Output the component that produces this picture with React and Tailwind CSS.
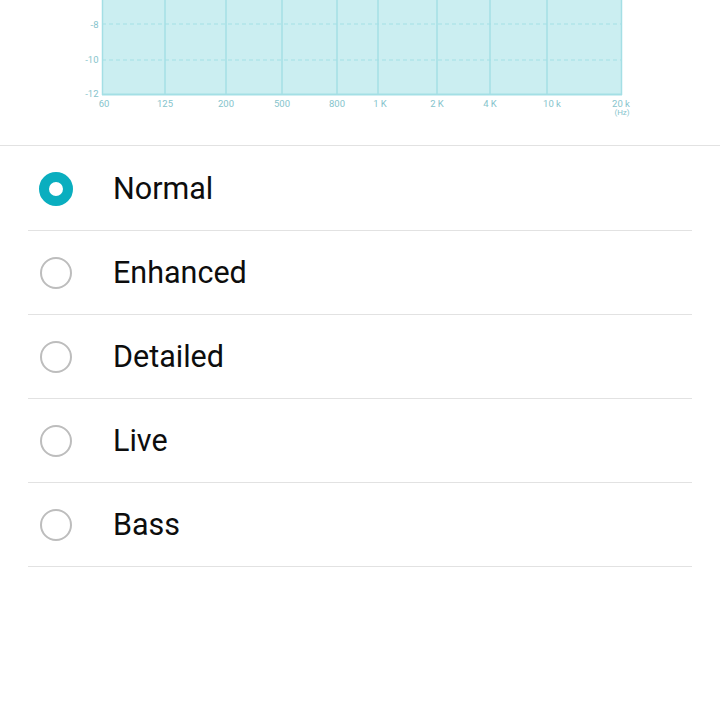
import React, { useState } from 'react';

const presets = ['Normal', 'Enhanced', 'Detailed', 'Live', 'Bass'];

const gridX = [165, 226, 282, 337, 378, 437, 490, 547];

const freqLabels = [
  { x: 104, t: '60' },
  { x: 165, t: '125' },
  { x: 226, t: '200' },
  { x: 282, t: '500' },
  { x: 337, t: '800' },
  { x: 380, t: '1 K' },
  { x: 437, t: '2 K' },
  { x: 490, t: '4 K' },
  { x: 552, t: '10 k' },
  { x: 621, t: '20 k' },
];

const dbLabels = [
  { y: 28, t: '-8' },
  { y: 63, t: '-10' },
  { y: 97, t: '-12' },
];

const EqChart = () => (
  <svg width="720" height="145" viewBox="0 0 720 145" className="block">
    <rect x="102" y="0" width="520" height="94" fill="#cbeef1" />
    {gridX.map((x) => (
      <line key={x} x1={x} y1="0" x2={x} y2="94" stroke="#a4dfe5" strokeWidth="1.5" />
    ))}
    <line x1="102" y1="24" x2="622" y2="24" stroke="#a4dfe5" strokeWidth="1.2" strokeDasharray="4 3" />
    <line x1="102" y1="60" x2="622" y2="60" stroke="#a4dfe5" strokeWidth="1.2" strokeDasharray="4 3" />
    <line x1="102.5" y1="0" x2="102.5" y2="95" stroke="#a4dfe5" strokeWidth="1.5" />
    <line x1="621.5" y1="0" x2="621.5" y2="95" stroke="#a4dfe5" strokeWidth="1.5" />
    <line x1="102" y1="94.5" x2="622" y2="94.5" stroke="#a4dfe5" strokeWidth="2" />
    <g fill="#86c4cc" fontFamily="Roboto, sans-serif" fontSize="9.5">
      {dbLabels.map((d) => (
        <text key={d.t} x="98.5" y={d.y} textAnchor="end">{d.t}</text>
      ))}
      {freqLabels.map((f) => (
        <text key={f.t} x={f.x} y="107" textAnchor="middle">{f.t}</text>
      ))}
      <text x="622" y="115" textAnchor="middle" fontSize="8">(Hz)</text>
    </g>
  </svg>
);

const Radio = ({ checked }) => (
  <div className="w-[34px] h-[34px] flex items-center justify-center shrink-0">
    {checked ? (
      <div className="w-[34px] h-[34px] rounded-full border-[10.5px] border-[#0aaebf] bg-white" />
    ) : (
      <div className="w-[32px] h-[32px] rounded-full border-2 border-[#bdbdbd] bg-white" />
    )}
  </div>
);

const App = () => {
  const [selected, setSelected] = useState('Normal');

  return (
    <div className="w-[720px] h-[720px] bg-white overflow-hidden" style={{ fontFamily: 'Roboto, "Noto Sans", sans-serif' }}>
      {/* Equalizer graph */}
      <div className="h-[146px] border-b border-[#e2e2e2]">
        <EqChart />
      </div>

      {/* Preset list */}
      <div className="px-[28px] pt-px">
        {presets.map((name) => (
          <button
            key={name}
            type="button"
            onClick={() => setSelected(name)}
            className="w-full h-[84px] flex items-center border-b border-[#e2e2e2] text-left"
          >
            <div className="ml-[11px]">
              <Radio checked={selected === name} />
            </div>
            <span className="ml-[40px] pt-[2px] text-[30.5px] text-[#0d0d0d] leading-none">{name}</span>
          </button>
        ))}
      </div>
    </div>
  );
};

export default App;
